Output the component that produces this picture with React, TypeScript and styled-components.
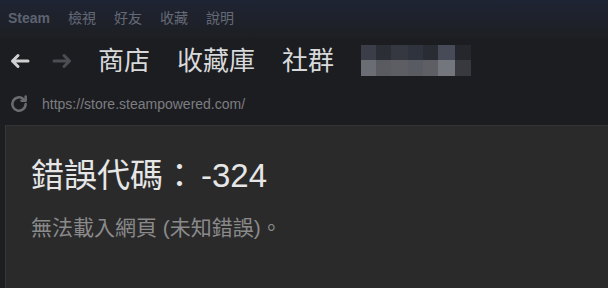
import React from "react";
import styled, { createGlobalStyle } from "styled-components";

const Global = createGlobalStyle`
  html, body { margin: 0; padding: 0; background: #1c1d20; }
  body { width: 608px; height: 288px; overflow: hidden; }
  * { box-sizing: border-box; }
`;

const Window = styled.div`
  width: 608px;
  height: 288px;
  display: flex;
  flex-direction: column;
  background: #1c1d20;
  font-family: "Liberation Sans", "Noto Sans CJK TC", sans-serif;
`;

const MenuBar = styled.div`
  height: 38px;
  display: flex;
  align-items: center;
  gap: 18px;
  padding: 0 0 2px 8px;
  background: linear-gradient(180deg, #1f2434 0%, #1e2129 60%, #1d1f23 100%);
`;

const MenuItem = styled.span<{ $latin?: boolean }>`
  font-size: 14px;
  color: ${(p) => (p.$latin ? "#5d6372" : "#656a77")};
  font-weight: ${(p) => (p.$latin ? 700 : 400)};
  line-height: 1;
`;

const NavRow = styled.div`
  height: 46px;
  display: flex;
  align-items: center;
  padding-left: 10px;
`;

const ArrowBtn = styled.span<{ $dim?: boolean }>`
  display: flex;
  width: 20px;
  margin-right: ${(p) => (p.$dim ? "26px" : "22px")};
  color: ${(p) => (p.$dim ? "#4b4d52" : "#cfd0d2")};
`;

const NavLinks = styled.div`
  display: flex;
  align-items: center;
  gap: 27px;
`;

const NavLink = styled.span`
  font-size: 26px;
  line-height: 1;
  color: #d8d9db;
`;

const Mosaic = styled.div`
  display: grid;
  grid-template-columns: 15px 15px 17px 15px 15px 17px 16px;
  grid-template-rows: 15px 16px;
  margin-top: -1px;
`;

const Tile = styled.div<{ $c: string }>`
  background: ${(p) => p.$c};
`;

const UrlRow = styled.div`
  height: 41px;
  display: flex;
  align-items: center;
  padding: 0 0 2px 9px;
  gap: 13px;
  color: #6b6c6f;
`;

const UrlText = styled.span`
  font-size: 14px;
  color: #7d7e81;
`;

const Body = styled.div`
  flex: 1;
  display: flex;
  background: #1d1e21;
  padding-left: 5px;
`;

const Panel = styled.div`
  flex: 1;
  background: #2a2a2b;
  border-top: 1px solid #343436;
  border-left: 1px solid #36373a;
  padding: 30px 0 0 25px;
`;

const Title = styled.h1`
  margin: 0;
  font-size: 33px;
  font-weight: 400;
  line-height: 40px;
  color: #e6e6e6;
  white-space: nowrap;
`;

const Code = styled.span`
  margin-left: 5px;
`;

const Message = styled.p`
  margin: 20px 0 0 0;
  font-size: 21px;
  line-height: 24px;
  color: #8a8a8b;
  white-space: nowrap;
`;

const top = ["#3b3e49", "#2c2e35", "#353841", "#2f333d", "#2a2c33", "#474a57", "#25272c"];
const bottom = ["#6b6d74", "#595b61", "#5c5e63", "#595b62", "#5d5f65", "#74767e", "#38393e"];

const Arrow = ({ dir }: { dir: "left" | "right" }) => (
  <svg width="20" height="20" viewBox="0 0 20 20" fill="none" stroke="currentColor" strokeWidth="3" strokeLinecap="round" strokeLinejoin="round">
    {dir === "left" ? (
      <path d="M2.5 10h15.5M8 4.5L2.5 10 8 15.5" />
    ) : (
      <path d="M17.5 10H2M12 4.5l5.5 5.5-5.5 5.5" />
    )}
  </svg>
);

const Reload = () => (
  <svg width="20" height="20" viewBox="0 0 24 24" fill="none" stroke="currentColor" strokeWidth="3" strokeLinecap="round" strokeLinejoin="round">
    <path d="M20 12a8 8 0 1 1-2.6-5.9" />
    <path d="M20 3v5h-5" />
  </svg>
);

export default function App() {
  return (
    <Window>
      <Global />
      <MenuBar>
        <MenuItem $latin>Steam</MenuItem>
        <MenuItem>檢視</MenuItem>
        <MenuItem>好友</MenuItem>
        <MenuItem>收藏</MenuItem>
        <MenuItem>說明</MenuItem>
      </MenuBar>
      <NavRow>
        <ArrowBtn>
          <Arrow dir="left" />
        </ArrowBtn>
        <ArrowBtn $dim>
          <Arrow dir="right" />
        </ArrowBtn>
        <NavLinks>
          <NavLink>商店</NavLink>
          <NavLink>收藏庫</NavLink>
          <NavLink>社群</NavLink>
          <Mosaic>
            {top.map((c, i) => (
              <Tile key={"t" + i} $c={c} />
            ))}
            {bottom.map((c, i) => (
              <Tile key={"b" + i} $c={c} />
            ))}
          </Mosaic>
        </NavLinks>
      </NavRow>
      <UrlRow>
        <Reload />
        <UrlText>https://store.steampowered.com/</UrlText>
      </UrlRow>
      <Body>
        <Panel>
          <Title>
            錯誤代碼：<Code>-324</Code>
          </Title>
          <Message>無法載入網頁 (未知錯誤)。</Message>
        </Panel>
      </Body>
    </Window>
  );
}
